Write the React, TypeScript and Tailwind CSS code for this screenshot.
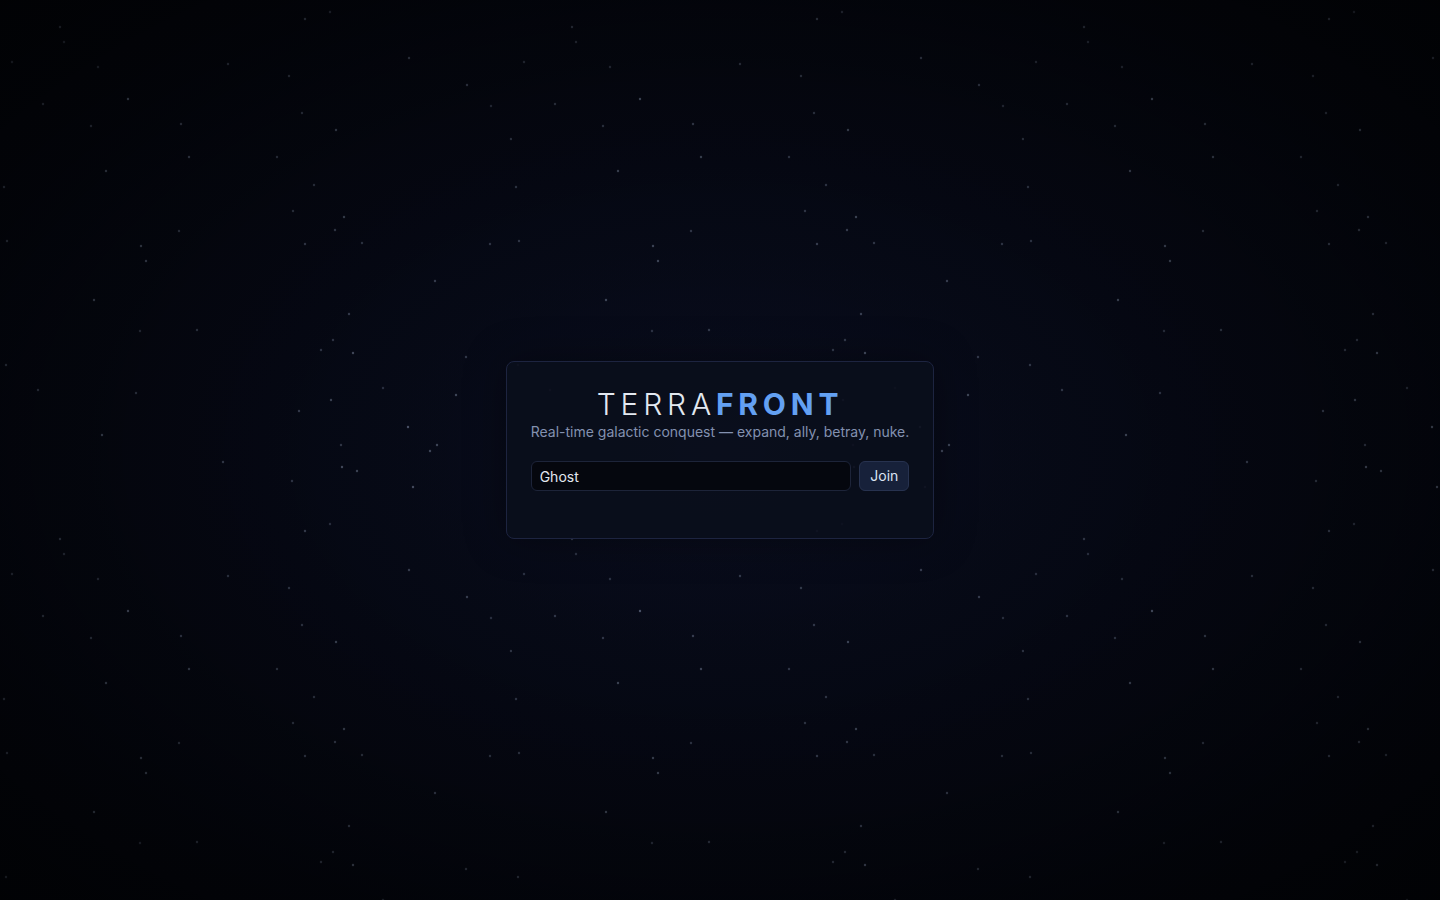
import React from "react";

const STARS: [number, number, number][] = [
  [60, 27, 0.35], [64, 42, 0.3], [12, 62, 0.3], [98, 67, 0.3], [128, 99, 0.55], [43, 104, 0.35],
  [228, 64, 0.35], [91, 126, 0.35], [181, 124, 0.4], [189, 157, 0.45], [106, 171, 0.45], [4, 187, 0.35],
  [179, 231, 0.35], [7, 241, 0.35], [141, 246, 0.45], [305, 19, 0.4], [330, 12, 0.3], [409, 58, 0.4],
  [289, 76, 0.35], [467, 85, 0.4], [491, 106, 0.3], [302, 113, 0.35], [336, 130, 0.45], [511, 139, 0.35],
  [277, 157, 0.35], [314, 185, 0.35], [293, 211, 0.35], [344, 217, 0.45], [335, 230, 0.4], [305, 244, 0.4],
  [362, 243, 0.35], [490, 244, 0.35], [146, 261, 0.45], [94, 300, 0.45], [6, 365, 0.35], [140, 331, 0.3],
  [197, 330, 0.35], [38, 390, 0.35], [136, 393, 0.35], [102, 435, 0.45], [223, 462, 0.4],
  [435, 281, 0.4], [349, 314, 0.4], [333, 340, 0.35], [321, 350, 0.35], [353, 353, 0.5], [466, 357, 0.35],
  [383, 388, 0.3], [331, 400, 0.45], [456, 395, 0.45], [299, 411, 0.4], [408, 427, 0.55], [437, 445, 0.45],
  [430, 451, 0.45], [341, 445, 0.35], [342, 467, 0.5], [357, 471, 0.45], [292, 481, 0.35], [413, 487, 0.5],
];

function Starfield() {
  return (
    <svg className="pointer-events-none absolute inset-0 h-full w-full" aria-hidden="true">
      <defs>
        <pattern id="stars" x="0" y="0" width="512" height="512" patternUnits="userSpaceOnUse">
          {STARS.map(([x, y, o], i) => (
            <circle key={i} cx={x} cy={y} r="1.2" fill="#a5b4d4" opacity={o * 0.85} />
          ))}
        </pattern>
      </defs>
      <rect width="100%" height="100%" fill="url(#stars)" />
    </svg>
  );
}

export default function App() {
  return (
    <div
      className="relative flex min-h-screen w-full items-center justify-center overflow-hidden bg-[radial-gradient(ellipse_at_center,#0a0e1f_0%,#060916_45%,#03050b_100%)]"
      style={{ fontFamily: "Inter, 'Noto Sans', sans-serif" }}
    >
      <Starfield />
      <div className="pointer-events-none absolute inset-0 bg-[radial-gradient(ellipse_at_center,rgba(0,0,0,0)_0%,rgba(0,0,0,0.15)_40%,rgba(0,0,0,0.6)_100%)]" />
      <div className="relative rounded-lg border border-[#1d2440] bg-[rgba(10,14,28,0.9)] p-6 shadow-[0_0_40px_rgba(0,0,0,0.35)]">
        <h1 className="text-center text-3xl leading-9 tracking-[0.16em]">
          <span className="font-light text-[#e2e8f0]">TERRA</span>
          <span className="font-bold text-[#63a0f2]">FRONT</span>
        </h1>
        <p className="text-center text-sm leading-5 text-[#8391b0]">
          Real-time galactic conquest — expand, ally, betray, nuke.
        </p>
        <div className="mt-[19px] flex gap-2">
          <input
            defaultValue="Ghost"
            className="h-[30px] flex-1 rounded-md border border-[#1d2439] bg-[#05070e] px-2 text-sm text-[#e2e8f0] outline-none"
          />
          <button className="h-[30px] rounded-md border border-[#27324f] bg-[#17213a] px-[10px] text-sm text-[#dbe4f3]">
            Join
          </button>
        </div>
        <div className="mt-2 h-[15px] text-xs text-[#8391b0]" />
      </div>
    </div>
  );
}
